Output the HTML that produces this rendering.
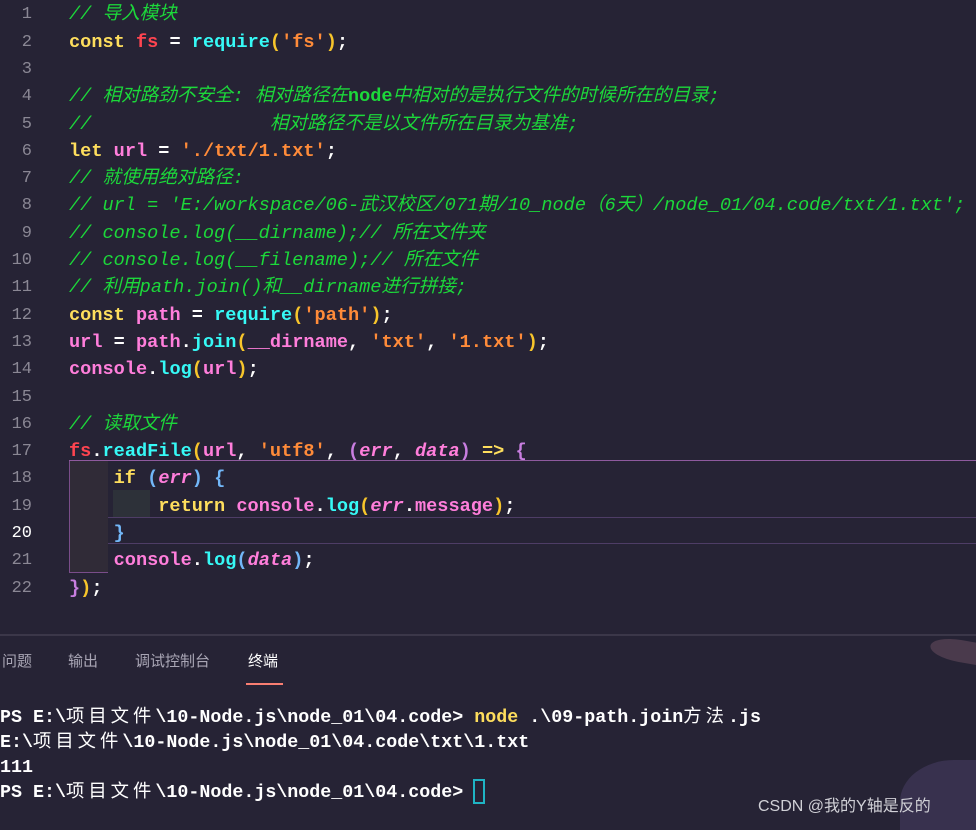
<!DOCTYPE html>
<html><head><meta charset="utf-8"><style>
body{margin:0;width:976px;height:823px;background:#262335;overflow:hidden;position:relative;font-family:"Liberation Mono","Noto Sans CJK SC",monospace;}
.ln{position:absolute;left:0;width:32px;text-align:right;color:#8a8794;font-size:17px;line-height:27px;transform:translateY(3px)}
.c{position:absolute;left:69px;font-size:18.6px;line-height:27px;white-space:pre;color:#ffffff;font-weight:bold;transform:translateY(3px)}
.cm{color:#1cd83a;font-style:italic;font-weight:normal}
.k{color:#fede5d}.v{color:#fe4450}.f{color:#36f9f6}.s{color:#ff8b39}.p{color:#ff7edb}.y{color:#f7c52b}.b{color:#72b7f8}.pu{color:#c87ee0}
.i{font-style:italic}
.t{position:absolute;left:0;font-size:18.33px;line-height:25px;white-space:pre;color:#ffffff;font-weight:bold;transform:translateY(2px)}
.t i{font-style:normal;letter-spacing:4px;font-weight:normal}
.tab{position:absolute;top:650px;font-family:"Liberation Sans","Noto Sans CJK SC",sans-serif;font-size:15px;color:#a9a6b5}
</style></head><body>
<div style="position:absolute;left:69px;top:460px;width:907px;height:1px;background:#8e5a9e"></div>
<div style="position:absolute;left:69px;top:461px;width:1px;height:112px;background:#7a4d8a"></div>
<div style="position:absolute;left:69px;top:572px;width:39px;height:1px;background:#7a4d8a"></div>
<div style="position:absolute;left:70px;top:461px;width:38px;height:111px;background:#302b37"></div>
<div style="position:absolute;left:113px;top:490px;width:37px;height:28px;background:#2d3139"></div>
<div style="position:absolute;left:108px;top:517px;width:868px;height:1px;background:#4e3d66"></div>
<div style="position:absolute;left:108px;top:543px;width:868px;height:1px;background:#4e3d66"></div>

<div class="ln" style="top:-2px">1</div><div class="c" style="top:-2px"><span class="cm">// 导入模块</span></div>
<div class="ln" style="top:26px">2</div><div class="c" style="top:26px"><span class="k">const</span> <span class="v">fs</span> = <span class="f">require</span><span class="y">(</span><span class="s">'fs'</span><span class="y">)</span>;</div>
<div class="ln" style="top:53px">3</div>
<div class="ln" style="top:80px">4</div><div class="c" style="top:80px"><span class="cm">// 相对路劲不安全: 相对路径在<b style="font-style:normal">node</b>中相对的是执行文件的时候所在的目录;</span></div>
<div class="ln" style="top:108px">5</div><div class="c" style="top:108px"><span class="cm">//                相对路径不是以文件所在目录为基准;</span></div>
<div class="ln" style="top:135px">6</div><div class="c" style="top:135px"><span class="k">let</span> <span class="p">url</span> = <span class="s">'./txt/1.txt'</span>;</div>
<div class="ln" style="top:162px">7</div><div class="c" style="top:162px"><span class="cm">// 就使用绝对路径:</span></div>
<div class="ln" style="top:189px">8</div><div class="c" style="top:189px"><span class="cm">// url = 'E:/workspace/06-武汉校区/071期/10_node（6天）/node_01/04.code/txt/1.txt';</span></div>
<div class="ln" style="top:217px">9</div><div class="c" style="top:217px"><span class="cm">// console.log(__dirname);// 所在文件夹</span></div>
<div class="ln" style="top:244px">10</div><div class="c" style="top:244px"><span class="cm">// console.log(__filename);// 所在文件</span></div>
<div class="ln" style="top:271px">11</div><div class="c" style="top:271px"><span class="cm">// 利用path.join()和__dirname进行拼接;</span></div>
<div class="ln" style="top:299px">12</div><div class="c" style="top:299px"><span class="k">const</span> <span class="p">path</span> = <span class="f">require</span><span class="y">(</span><span class="s">'path'</span><span class="y">)</span>;</div>
<div class="ln" style="top:326px">13</div><div class="c" style="top:326px"><span class="p">url</span> = <span class="p">path</span>.<span class="f">join</span><span class="y">(</span><span class="p">__dirname</span>, <span class="s">'txt'</span>, <span class="s">'1.txt'</span><span class="y">)</span>;</div>
<div class="ln" style="top:353px">14</div><div class="c" style="top:353px"><span class="p">console</span>.<span class="f">log</span><span class="y">(</span><span class="p">url</span><span class="y">)</span>;</div>
<div class="ln" style="top:381px">15</div>
<div class="ln" style="top:408px">16</div><div class="c" style="top:408px"><span class="cm">// 读取文件</span></div>
<div class="ln" style="top:435px">17</div><div class="c" style="top:435px"><span class="v">fs</span>.<span class="f">readFile</span><span class="y">(</span><span class="p">url</span>, <span class="s">'utf8'</span>, <span class="pu">(</span><span class="p i">err</span>, <span class="p i">data</span><span class="pu">)</span> <span class="k">=&gt;</span> <span class="pu">{</span></div>
<div class="ln" style="top:462px">18</div><div class="c" style="top:462px">    <span class="k">if</span> <span class="b">(</span><span class="p i">err</span><span class="b">)</span> <span class="b">{</span></div>
<div class="ln" style="top:490px">19</div><div class="c" style="top:490px">        <span class="k">return</span> <span class="p">console</span>.<span class="f">log</span><span class="y">(</span><span class="p i">err</span>.<span class="p">message</span><span class="y">)</span>;</div>
<div class="ln" style="top:517px;color:#fff">20</div><div class="c" style="top:517px">    <span class="b">}</span></div>
<div class="ln" style="top:544px">21</div><div class="c" style="top:544px">    <span class="p">console</span>.<span class="f">log</span><span class="b">(</span><span class="p i">data</span><span class="b">)</span>;</div>
<div class="ln" style="top:572px">22</div><div class="c" style="top:572px"><span class="pu">}</span><span class="y">)</span>;</div>

<div style="position:absolute;left:0;top:634px;width:976px;height:2px;background:#3b3749"></div>
<div style="position:absolute;left:930px;top:640px;width:60px;height:22px;background:#4a3a4c;border-radius:50% 0 0 50%;transform:rotate(10deg)"></div>
<div style="position:absolute;left:900px;top:760px;width:90px;height:70px;background:#40385a;border-radius:60% 0 0 0;opacity:.7"></div>
<div class="tab" style="left:2px">问题</div>
<div class="tab" style="left:68px">输出</div>
<div class="tab" style="left:135px">调试控制台</div>
<div class="tab" style="left:248px;color:#fff">终端</div>
<div style="position:absolute;left:246px;top:683px;width:37px;height:2px;background:#f97e72"></div>

<div class="t" style="top:703px">PS E:\<i>项目文件</i>\10-Node.js\node_01\04.code&gt; <span style="color:#fede5d">node</span> .\09-path.join<i>方法</i>.js</div>
<div class="t" style="top:728px">E:\<i>项目文件</i>\10-Node.js\node_01\04.code\txt\1.txt</div>
<div class="t" style="top:753px">111</div>
<div class="t" style="top:778px">PS E:\<i>项目文件</i>\10-Node.js\node_01\04.code&gt; </div>
<div style="position:absolute;left:473px;top:779px;width:8px;height:21px;border:2px solid #1fb4c4"></div>
<div style="position:absolute;left:758px;top:792px;font-family:'Liberation Sans','Noto Sans CJK SC',sans-serif;font-size:16px;color:#d0d0d6">CSDN @我的Y轴是反的</div>
</body></html>
